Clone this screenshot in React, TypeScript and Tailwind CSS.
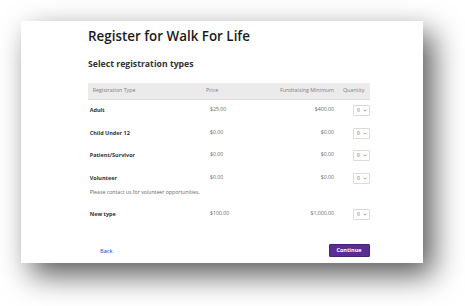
import React from "react";

const rows = [
  { name: "Adult", price: "$25.00", min: "$400.00" },
  { name: "Child Under 12", price: "$0.00", min: "$0.00" },
  { name: "Patient/Survivor", price: "$0.00", min: "$0.00" },
  { name: "Volunteer", price: "$0.00", min: "$0.00", note: "Please contact us for volunteer opportunities." },
  { name: "New type", price: "$100.00", min: "$1,000.00" },
];

function QtySelect() {
  return (
    <div className="flex h-[11px] w-[16.5px] items-center justify-between rounded-[1px] border border-[#dcdcdc] bg-white pl-[3px] pr-[2px]">
      <span className="text-[4.8px] leading-none text-[#666]">0</span>
      <svg width="4" height="3" viewBox="0 0 4 3" className="block">
        <path d="M0.5 0.7 L2 2.2 L3.5 0.7" fill="none" stroke="#777" strokeWidth="0.7" />
      </svg>
    </div>
  );
}

export default function App() {
  return (
    <div className="h-[306px] w-[465px] overflow-hidden bg-white pl-[21px] pt-[21px] font-['Open_Sans',sans-serif]">
      <div className="h-[242px] w-[402px] overflow-hidden bg-white shadow-[10px_12px_28px_rgba(0,0,0,0.65)]">
        <div className="ml-[67px] w-[281.5px] pt-[5px]">
          <h1 className="text-[13.4px] font-semibold leading-[20px] text-[#1c1c1c]">Register for Walk For Life</h1>
          <h2 className="mt-[11.3px] text-[8.7px] font-bold leading-[14px] text-[#333]">Select registration types</h2>

          <div className="mt-[11.7px]">
            <div className="grid h-[17px] grid-cols-[114px_86px_50px_1fr] items-center border-b border-[#dadada] bg-[#ebebeb] text-[5.3px] leading-none text-[#808080]">
              <div className="pl-[4.7px]">Registration Type</div>
              <div className="pl-[4px]">Price</div>
              <div className="flex justify-end pr-[4px] whitespace-nowrap">Fundraising Minimum</div>
              <div className="pl-[5px]">Quantity</div>
            </div>

            {rows.map((r) => (
              <div key={r.name} className={r.note ? "h-[36px] pt-[5px]" : "h-[22.6px] pt-[5px]"}>
                <div className="grid grid-cols-[114px_86px_50px_1fr] items-start">
                  <div className="pl-[1.7px] text-[5.5px] font-bold leading-[11px] text-[#333]">{r.name}</div>
                  <div className="pl-[8px] text-[5.2px] leading-[8px] text-[#666]">{r.price}</div>
                  <div className="pr-[4px] text-right text-[5.2px] leading-[8px] text-[#666]">{r.min}</div>
                  <div className="flex justify-end">
                    <QtySelect />
                  </div>
                </div>
                {r.note && (
                  <div className="mt-[4px] pl-[1.7px] text-[5.2px] leading-[8px] text-[#666]">{r.note}</div>
                )}
              </div>
            ))}
          </div>

          <div className="mt-[18px] flex items-center justify-between">
            <span className="pl-[12px] text-[5.5px] font-semibold text-[#3b73c4]">Back</span>
            <div className="flex h-[13px] w-[41px] items-center justify-center rounded-[1px] border border-[#4a2178] bg-[#5c2d91] text-[5.5px] font-bold leading-none text-white">
              Continue
            </div>
          </div>
        </div>
      </div>
    </div>
  );
}
